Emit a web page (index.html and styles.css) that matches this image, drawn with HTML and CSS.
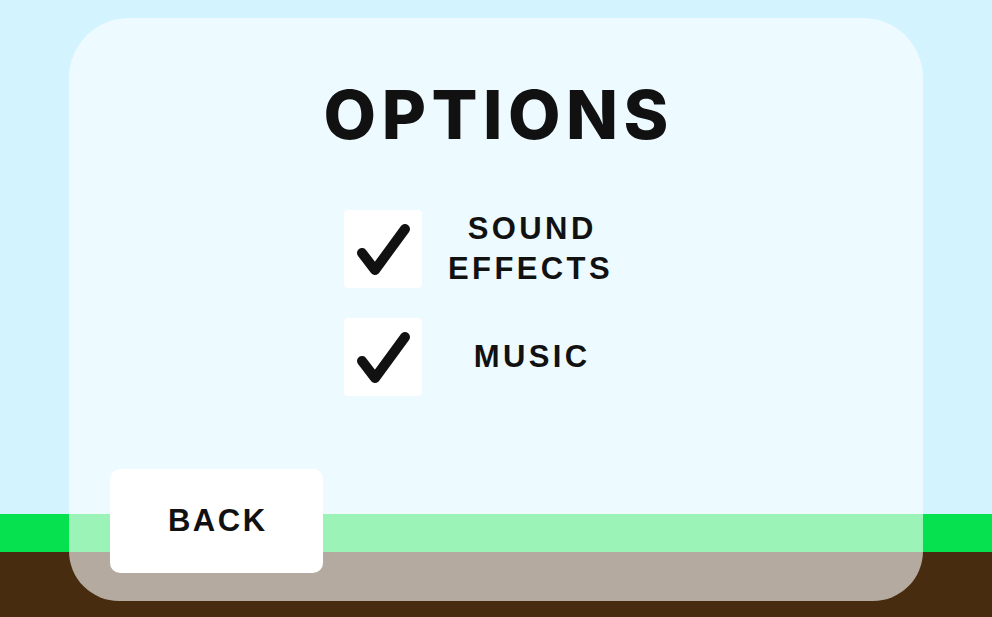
FILE: index.html
```html
<!DOCTYPE html>
<html lang="en">
<head>
<meta charset="utf-8">
<title>Options</title>
<link rel="stylesheet" href="styles.css">
</head>
<body>
  <main class="scene">
    <section class="panel">
      <h1 class="title">OPTIONS</h1>
      <div class="options">
        <div class="option">
          <span class="checkbox">
            <svg viewBox="0 0 78 78" width="78" height="78" aria-hidden="true">
              <polyline points="18,43 31,60 61,19" fill="none" stroke="#111" stroke-width="10" stroke-linecap="round" stroke-linejoin="round"/>
            </svg>
          </span>
          <span class="label">SOUND<br>EFFECTS</span>
        </div>
        <div class="option">
          <span class="checkbox">
            <svg viewBox="0 0 78 78" width="78" height="78" aria-hidden="true">
              <polyline points="18,43 31,60 61,19" fill="none" stroke="#111" stroke-width="10" stroke-linecap="round" stroke-linejoin="round"/>
            </svg>
          </span>
          <span class="label">MUSIC</span>
        </div>
      </div>
      <button class="back">BACK</button>
    </section>
  </main>
</body>
</html>
```

FILE: styles.css
```css
html, body {
  margin: 0;
  height: 100%;
}

/* sky, grass strip and dirt behind the menu */
.scene {
  height: 617px;
  box-sizing: border-box;
  padding: 18px 69px 16px;
  display: flex;
  background: linear-gradient(to bottom,
    #d3f3ff 0, #d3f3ff 514px,
    #05e14f 514px, #05e14f 552px,
    #472c10 552px, #472c10 100%);
}

.panel {
  flex: 1;
  display: flex;
  flex-direction: column;
  align-items: center;
  background: rgba(255, 255, 255, 0.6);
  border-radius: 60px 60px 50px 50px;
  padding-top: 62px;
  padding-bottom: 28px;
}

.title {
  margin: 0;
  font-family: Inter, "Liberation Sans", sans-serif;
  font-weight: 800;
  font-size: 68px;
  line-height: 1;
  letter-spacing: 5.5px;
  text-indent: 5.5px;
  color: #111;
}

.options {
  margin-top: 61px;
  display: flex;
  flex-direction: column;
  gap: 29px;
}

.option {
  display: flex;
  align-items: center;
}

.checkbox {
  width: 78px;
  height: 78px;
  background: #fff;
  border-radius: 4px;
  display: flex;
}

.label {
  box-sizing: border-box;
  width: 226px;
  padding-right: 9px;
  text-align: center;
  font-family: "Liberation Sans", Arial, sans-serif;
  font-weight: 700;
  font-size: 31px;
  line-height: 40px;
  letter-spacing: 3.4px;
  text-indent: 3.4px;
  color: #111;
}

.back {
  margin-top: auto;
  align-self: flex-start;
  margin-left: 41px;
  width: 213px;
  height: 104px;
  border: none;
  border-radius: 10px;
  background: #fff;
  font-family: "Liberation Sans", Arial, sans-serif;
  font-weight: 700;
  font-size: 31px;
  letter-spacing: 2.5px;
  text-indent: 2.5px;
  color: #111;
  padding: 0;
}
```
